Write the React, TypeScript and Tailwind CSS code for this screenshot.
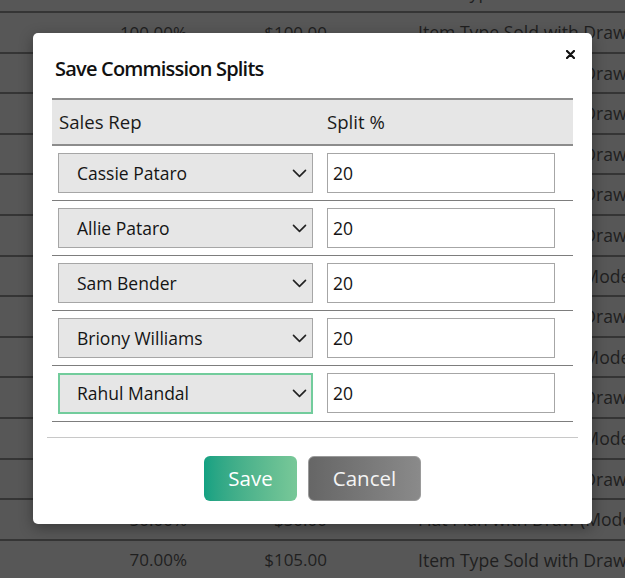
const bgRows = [
  ['100.00%', '$100.00', 'Item Type Sold with Draw'],
  ['100.00%', '$100.00', 'Item Type Sold with Draw'],
  ['100.00%', '$100.00', 'Item Type Sold with Draw'],
  ['100.00%', '$100.00', 'Item Type Sold with Draw'],
  ['100.00%', '$100.00', 'Item Type Sold with Draw'],
  ['100.00%', '$100.00', 'Item Type Sold with Draw'],
  ['100.00%', '$100.00', 'Item Type Sold with Draw'],
  ['100.00%', '$100.00', 'Item Type Sold with Model'],
  ['100.00%', '$100.00', 'Item Type Sold with Draw'],
  ['100.00%', '$100.00', 'Item Type Sold with Model'],
  ['100.00%', '$100.00', 'Item Type Sold with Draw'],
  ['100.00%', '$100.00', 'Item Type Sold with Model'],
  ['100.00%', '$100.00', 'Item Type Sold with Draw'],
  ['50.00%', '$50.00', 'Flat Plan with Draw (Model)'],
  ['70.00%', '$105.00', 'Item Type Sold with Draw'],
];

const splits = [
  { rep: 'Cassie Pataro', pct: '20' },
  { rep: 'Allie Pataro', pct: '20' },
  { rep: 'Sam Bender', pct: '20' },
  { rep: 'Briony Williams', pct: '20' },
  { rep: 'Rahul Mandal', pct: '20', focused: true },
];

const font = { fontFamily: '"Open Sans", "Noto Sans", sans-serif' };

function Chevron() {
  return (
    <svg width="15" height="9" viewBox="0 0 15 9" fill="none">
      <path d="M1.5 1.4 L7.5 7.4 L13.5 1.4" stroke="#222" strokeWidth="1.6" strokeLinecap="round" strokeLinejoin="round" />
    </svg>
  );
}

export default function App() {
  return (
    <div className="relative w-[625px] h-[578px] overflow-hidden bg-[#575757]" style={font}>
      {/* table behind the overlay */}
      <div className="-mt-[27.6px] flex flex-col">
        {bgRows.map((r, i) => (
          <div
            key={i}
            className="flex h-[40.6px] shrink-0 items-center border-b-2 border-[#353535] text-[17px] text-[#1f1f1f] whitespace-nowrap"
          >
            <div className="w-[187px] shrink-0 text-right">{r[0]}</div>
            <div className="w-[140px] shrink-0 text-right">{r[1]}</div>
            <div className="shrink-0 pl-[91px] text-[17.6px]">{r[2]}</div>
          </div>
        ))}
      </div>

      {/* modal */}
      <div className="absolute left-[33px] top-[33px] w-[559px] h-[491px] rounded-[5px] bg-white shadow-[0_4px_14px_rgba(0,0,0,0.35)]">
        <button className="absolute right-[16px] top-[15px] flex h-[12px] w-[12px] items-center justify-center">
          <svg width="9" height="9" viewBox="0 0 9 9">
            <path d="M1 1 L8 8 M8 1 L1 8" stroke="#111" strokeWidth="2.2" strokeLinecap="round" />
          </svg>
        </button>

        <h2 className="pl-[22px] pt-[21.5px] text-[20px] leading-[28px] font-semibold tracking-[-0.8px] text-[#111]">
          Save Commission Splits
        </h2>

        <div className="mx-[19px] mt-[15.5px]">
          <div className="flex border-t-2 border-b-2 border-[#8c8c8c] bg-[#e6e6e6] py-[10px] text-[18.6px] leading-6 text-[#1a1a1a]">
            <div className="w-[268px] pl-[7px]">Sales Rep</div>
            <div className="pl-[7px]">Split %</div>
          </div>

          {splits.map((s) => (
            <div key={s.rep} className="flex border-b border-[#7d7d7d] pt-[7px] pb-[7px]">
              <div className="w-[268px] pl-[6px] pr-[7px]">
                <div
                  className={
                    s.focused
                      ? 'flex h-[41px] items-center justify-between border-2 border-[#72cc9c] bg-[#e6e6e6] pl-[17px] pr-[4px]'
                      : 'flex h-[40px] items-center justify-between border border-[#a6a6a6] bg-[#e6e6e6] pl-[18px] pr-[5px]'
                  }
                >
                  <span className="text-[17.5px] text-[#141414]">{s.rep}</span>
                  <Chevron />
                </div>
              </div>
              <div className="pl-[7px]">
                <div className="flex h-[40px] w-[228px] items-center border border-[#a6a6a6] bg-white pl-[5px] text-[17.5px] text-[#141414]">
                  {s.pct}
                </div>
              </div>
            </div>
          ))}
        </div>

        <div className="mx-[14px] mt-[15px] border-t border-[#c8c8c8]" />

        <div className="mt-[18px] flex justify-center gap-[11px]">
          <button className="h-[45px] w-[93px] rounded-[6px] bg-gradient-to-r from-[#12a182] to-[#78c898] text-[20.5px] text-white">
            Save
          </button>
          <button className="h-[45px] w-[113px] rounded-[6px] border border-[#9a9a9a] bg-gradient-to-r from-[#666666] to-[#8a8a8a] text-[20.5px] text-[#f4f4f4]">
            Cancel
          </button>
        </div>
      </div>
    </div>
  );
}
